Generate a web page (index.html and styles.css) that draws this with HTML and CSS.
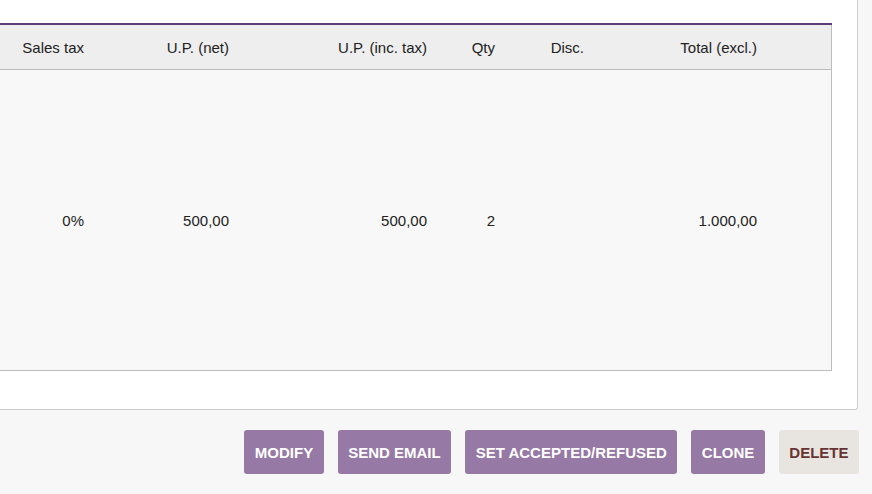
FILE: index.html
```html
<!DOCTYPE html>
<html lang="en">
<head>
  <meta charset="UTF-8">
  <title>Proposal lines</title>
  <link rel="stylesheet" href="styles.css">
</head>
<body>
  <div class="card">
    <table class="lines">
      <colgroup>
        <col style="width: 92px">
        <col style="width: 145px">
        <col style="width: 198px">
        <col style="width: 68px">
        <col style="width: 89px">
        <col style="width: 173px">
        <col>
      </colgroup>
      <thead>
        <tr>
          <th>Sales tax</th>
          <th>U.P. (net)</th>
          <th>U.P. (inc. tax)</th>
          <th>Qty</th>
          <th>Disc.</th>
          <th>Total (excl.)</th>
          <th></th>
        </tr>
      </thead>
      <tbody>
        <tr>
          <td>0%</td>
          <td>500,00</td>
          <td>500,00</td>
          <td>2</td>
          <td></td>
          <td>1.000,00</td>
          <td></td>
        </tr>
      </tbody>
    </table>
  </div>

  <div class="actions">
    <button class="but-action">MODIFY</button>
    <button class="but-action">SEND EMAIL</button>
    <button class="but-action">SET ACCEPTED/REFUSED</button>
    <button class="but-action">CLONE</button>
    <button class="but-action but-delete">DELETE</button>
  </div>
</body>
</html>
```

FILE: styles.css
```css
body {
  margin: 0;
  background-color: #f7f7f7;
  font-family: "Liberation Sans", Arial, sans-serif;
  font-size: 15px;
  color: #222;
}
.card {
  width: 858px;
  box-sizing: border-box;
  background: white;
  border-right: 1px solid #cdcdcd;
  border-bottom: 1px solid #cdcdcd;
  border-bottom-right-radius: 3px;
  padding: 23px 26px 38px 0;
}
.lines {
  width: 832px;
  table-layout: fixed;
  border-collapse: collapse;
  border-top: 2px solid #5b3b7a;
  border-right: 1px solid #bcbcbc;
  border-bottom: 1px solid #bcbcbc;
}
.lines th, .lines td {
  text-align: right;
  padding: 0 8px;
  white-space: nowrap;
}
.lines th {
  font-weight: normal;
  background-color: #eeeeee;
  height: 44px;
  border-bottom: 1px solid #bcbcbc;
}
.lines td {
  background-color: #f8f8f8;
  height: 300px;
}
.actions {
  display: flex;
  justify-content: flex-end;
  gap: 14px;
  width: 859px;
  margin-top: 20px;
}
.but-action {
  font-family: "Liberation Sans", Arial, sans-serif;
  font-size: 15px;
  font-weight: bold;
  color: white;
  background-color: #9679a5;
  border: none;
  border-radius: 3px;
  height: 44px;
  padding: 0 10.5px;
  cursor: pointer;
}
.but-delete {
  background-color: #e8e5e1;
  color: #633;
}
```
